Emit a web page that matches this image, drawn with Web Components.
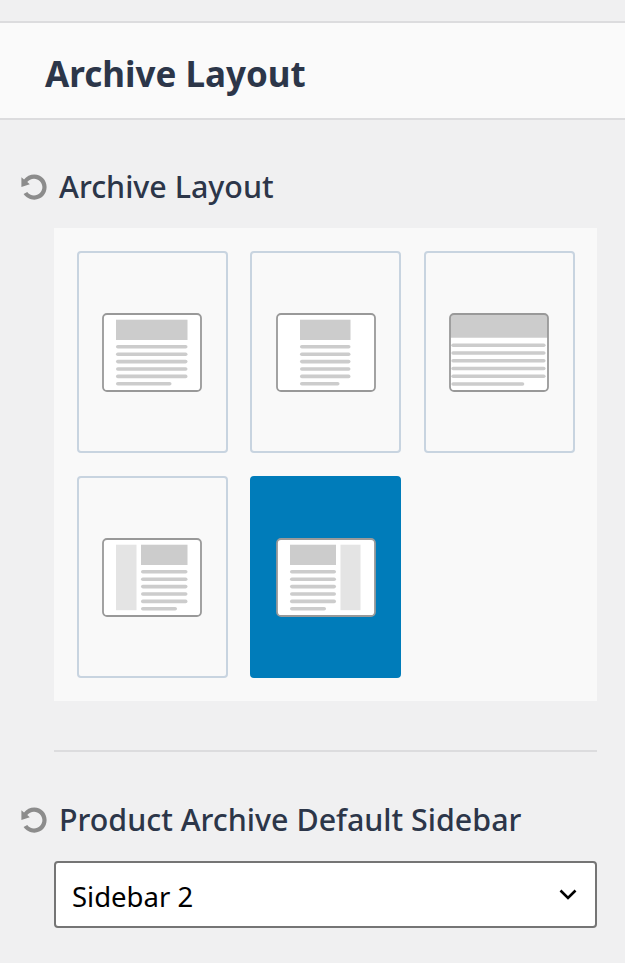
<!DOCTYPE html>
<html>
<head>
<meta charset="utf-8">
<title>Archive Layout</title>
<style>
  html, body { margin: 0; padding: 0; }
  body {
    background: #f0f0f1;
    font-family: "Noto Sans", "Open Sans", sans-serif;
    color: #2c3649;
    width: 625px;
    height: 963px;
    overflow: hidden;
  }
  control-group { margin: 0 28px 0 20px; }
</style>
</head>
<body>
  <panel-header>Archive Layout</panel-header>

  <control-group style="padding-top: 47px">
    <span slot="label">Archive Layout</span>
    <layout-picker>
      <layout-option variant="full"></layout-option>
      <layout-option variant="narrow"></layout-option>
      <layout-option variant="wide"></layout-option>
      <layout-option variant="left"></layout-option>
      <layout-option variant="right" selected></layout-option>
    </layout-picker>
  </control-group>

  <section-divider></section-divider>

  <control-group>
    <span slot="label">Product Archive Default Sidebar</span>
    <select-field value="Sidebar 2"></select-field>
  </control-group>

<script>
  class PanelHeader extends HTMLElement {
    constructor() {
      super();
      this.attachShadow({ mode: "open" });
      this.shadowRoot.innerHTML = `
        <style>
          :host {
            display: block;
            margin-top: 21px;
            height: 95px;
            padding-left: 45px;
            background: #fafafa;
            border-top: 2px solid #dcdcde;
            border-bottom: 2px solid #dcdcde;
            font-size: 35px;
            font-weight: 700;
            line-height: 101px;
          }
        </style>
        <slot></slot>
      `;
    }
  }

  class ControlGroup extends HTMLElement {
    constructor() {
      super();
      this.attachShadow({ mode: "open" });
      this.shadowRoot.innerHTML = `
        <style>
          :host { display: block; }
          .title {
            display: flex;
            align-items: center;
            gap: 11px;
            height: 40px;
            font-size: 30.4px;
            font-weight: 500;
          }
          .label { padding-bottom: 2px; }
          svg { width: 28px; height: 28px; fill: #8c8c8c; flex: none; }
          .body { margin: 21px 0 0 34px; }
        </style>
        <div class="title">
          <svg viewBox="0 0 20 20"><path d="M10.25 1.02c5.1 0 8.75 4.04 8.75 9s-3.65 9-8.75 9c-3.2 0-6.02-1.59-7.68-3.99l2.59-1.52c1.1 1.5 2.86 2.51 4.84 2.51 3.3 0 6-2.79 6-6s-2.7-6-6-6c-1.97 0-3.72 1-4.82 2.49L7 8.02l-6 2v-7L2.89 4.6C4.55 2.4 7.23 1.02 10.25 1.02z"/></svg>
          <div class="label"><slot name="label"></slot></div>
        </div>
        <div class="body"><slot></slot></div>
      `;
    }
  }

  class LayoutPicker extends HTMLElement {
    constructor() {
      super();
      this.attachShadow({ mode: "open" });
      this.shadowRoot.innerHTML = `
        <style>
          :host {
            display: grid;
            grid-template-columns: repeat(3, 1fr);
            gap: 23px 22.5px;
            padding: 23px 22.1px 23px 22.9px;
            background: #f9f9f9;
          }
        </style>
        <slot></slot>
      `;
    }
  }

  class LayoutOption extends HTMLElement {
    constructor() {
      super();
      this.attachShadow({ mode: "open" });
    }

    // every thumbnail is the same frame, only the hero, lines and sidebar move
    thumbnail(variant) {
      const spots = {
        full: { x: 14, w: 71.5, last: 55.5, top: 32, step: 7.4 },
        narrow: { x: 24, w: 50.5, last: 39.5, top: 32, step: 7.4 },
        wide: { x: 2.3, w: 94.3, last: 73, top: 30.5, step: 7.74 },
        left: { x: 39, w: 46.5, last: 36, top: 32, step: 7.4 },
        right: { x: 14, w: 46, last: 36, top: 32, step: 7.4 }
      };
      const s = spots[variant];
      let lines = "";
      for (let i = 0; i < 6; i++) {
        const w = i == 5 ? s.last : s.w;
        lines += `<rect x="${s.x}" y="${s.top + i * s.step}" width="${w}" height="3.6" rx="1.8" fill="#ccc"/>`;
      }
      let hero = `<rect x="${s.x}" y="6.7" width="${s.w}" height="20.3" fill="#ccc"/>`;
      if (variant == "wide") {
        hero = `<path d="M1 5a4 4 0 0 1 4-4h90a4 4 0 0 1 4 4v19.7H1z" fill="#ccc"/>`;
      }
      let side = "";
      if (variant == "left") side = `<rect x="14" y="6.7" width="20.5" height="65.5" fill="#e4e4e4"/>`;
      if (variant == "right") side = `<rect x="64.5" y="6.7" width="20" height="65.5" fill="#e4e4e4"/>`;
      return `
        <svg viewBox="0 0 100 79" width="100" height="79">
          <rect x="1" y="1" width="98" height="77" rx="4" fill="#fff"/>
          ${side}${hero}${lines}
          <rect x="1" y="1" width="98" height="77" rx="4" fill="none" stroke="#999" stroke-width="1.8"/>
        </svg>
      `;
    }

    connectedCallback() {
      this.shadowRoot.innerHTML = `
        <style>
          :host {
            display: flex;
            align-items: center;
            justify-content: center;
            box-sizing: border-box;
            height: 202px;
            border: 2px solid #c8d4e0;
            border-radius: 4px;
          }
          :host([selected]) { background: #007cba; border-color: #007cba; }
          svg { display: block; }
        </style>
        ${this.thumbnail(this.getAttribute("variant"))}
      `;
    }
  }

  class SectionDivider extends HTMLElement {
    constructor() {
      super();
      this.attachShadow({ mode: "open" });
      this.shadowRoot.innerHTML = `
        <style>
          :host {
            display: block;
            height: 2px;
            margin: 49px 28px 48px 54px;
            background: #dcdcde;
          }
        </style>
      `;
    }
  }

  class SelectField extends HTMLElement {
    constructor() {
      super();
      this.attachShadow({ mode: "open" });
    }

    connectedCallback() {
      this.shadowRoot.innerHTML = `
        <style>
          :host {
            display: flex;
            align-items: center;
            justify-content: space-between;
            box-sizing: border-box;
            height: 67px;
            padding: 4px 18px 0 16px;
            background: #fff;
            border: 2px solid #757575;
            border-radius: 4px;
            color: #000;
            font-size: 27.5px;
          }
          svg { width: 18px; height: 11px; fill: none; stroke: #000; stroke-width: 2.6; margin-top: -4px; }
        </style>
        <span>${this.getAttribute("value")}</span>
        <svg viewBox="0 0 18 11"><path d="M1.5 1.5 9 9l7.5-7.5"/></svg>
      `;
    }
  }

  customElements.define("panel-header", PanelHeader);
  customElements.define("control-group", ControlGroup);
  customElements.define("layout-picker", LayoutPicker);
  customElements.define("layout-option", LayoutOption);
  customElements.define("section-divider", SectionDivider);
  customElements.define("select-field", SelectField);
</script>
</body>
</html>
